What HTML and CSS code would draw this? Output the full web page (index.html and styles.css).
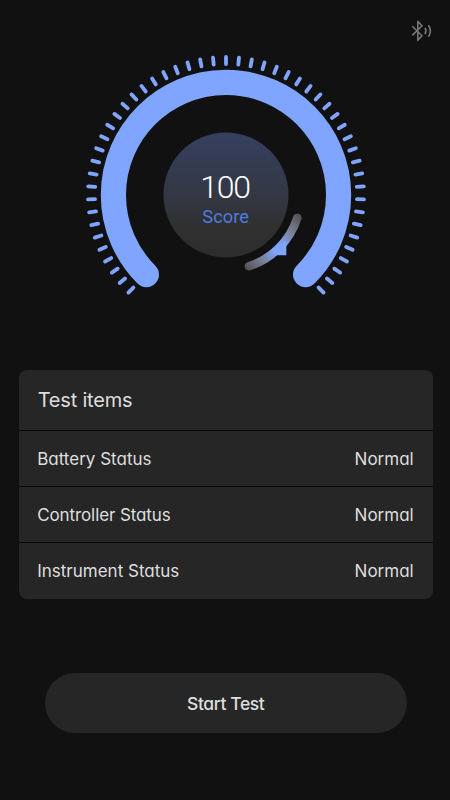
FILE: index.html
```html
<!DOCTYPE html>
<html lang="en">
<head>
<meta charset="utf-8">
<meta name="viewport" content="width=device-width, initial-scale=1">
<title>Vehicle test</title>
<link rel="stylesheet" href="styles.css">
</head>
<body>
<main class="screen">
  <header class="topbar">
    <svg class="bluetooth" viewBox="0 0 22 24" aria-label="Bluetooth">
      <path d="M1.3 7.2 11 16.8 6.8 21.3V2.4L11 6.8 1.3 16.4"/>
      <path d="M14 8.8q1.8 3.2 0 6.4"/>
      <path d="M17.4 6.2q4 5.8 0 11.6"/>
    </svg>
  </header>
  <section class="gauge">
    <svg class="dial" viewBox="-145 -145 290 250">
      <defs>
        <linearGradient id="disc" x1="0" y1="0" x2="0" y2="1">
          <stop offset="0" stop-color="#34405f"/>
          <stop offset=".5" stop-color="#343844"/>
          <stop offset=".75" stop-color="#303031"/>
          <stop offset="1" stop-color="#2d2d2d"/>
        </linearGradient>
        <linearGradient id="pointer" gradientUnits="userSpaceOnUse" x1="73" y1="20" x2="20" y2="73">
          <stop offset="0" stop-color="#545456"/>
          <stop offset=".22" stop-color="#777e91"/>
          <stop offset=".48" stop-color="#80a5ff"/>
          <stop offset=".56" stop-color="#80a5ff"/>
          <stop offset=".78" stop-color="#777e91"/>
          <stop offset="1" stop-color="#545456"/>
        </linearGradient>
      </defs>
      <g id="ticks" class="tick-marks"></g>
      <path class="ring" d="M-79.6 79.6A112.6 112.6 0 1 1 79.6 79.6"/>
      <circle r="62.5" fill="url(#disc)"/>
      <path class="pointer-arc" d="M71.3 22.9A74.9 74.9 0 0 1 22.9 71.3"/>
      <path class="pointer-tip" d="M60.3 46V60.2H51.5L46 56Z"/>
    </svg>
    <div class="score">
      <strong class="score-value">100</strong>
      <span class="score-label">Score</span>
    </div>
  </section>
  <section class="panel">
    <h2 class="panel-title">Test items</h2>
    <div class="row"><span>Battery Status</span><span>Normal</span></div>
    <div class="row"><span class="tight">Controller Status</span><span>Normal</span></div>
    <div class="row"><span>Instrument Status</span><span>Normal</span></div>
  </section>
  <button class="start" type="button">Start Test</button>
</main>
<script src="gauge.js"></script>
</body>
</html>
```
FILE: styles.css
```css
* { box-sizing: border-box; }
body { margin: 0; background: #111; }
.screen {
  width: 450px;
  height: 800px;
  display: flex;
  flex-direction: column;
  background: #111;
  color: #dedede;
  font-family: Inter, "Noto Sans", sans-serif;
  font-feature-settings: "cv11" 1;
}
.topbar {
  height: 49.5px;
  padding: 18.5px 17.5px 0 0;
  display: flex;
  justify-content: flex-end;
}
.bluetooth {
  width: 22px;
  height: 24px;
  fill: none;
  stroke: #777;
  stroke-width: 1.6;
  stroke-linejoin: round;
}
.gauge {
  width: 290px;
  height: 250px;
  margin-left: 80.6px;
  display: grid;
}
.dial, .score { grid-area: 1 / 1; }
.dial { width: 290px; height: 250px; }
.tick-marks { stroke: #80a5ff; stroke-width: 3.8; stroke-linecap: round; }
.ring { fill: none; stroke: #80a5ff; stroke-width: 25.2; stroke-linecap: round; }
.pointer-arc { fill: none; stroke: url(#pointer); stroke-width: 8.5; stroke-linecap: round; }
.pointer-tip { fill: #80a5ff; }
.score {
  padding-top: 119px;
  display: flex;
  flex-direction: column;
  align-items: center;
  font-family: Roboto, sans-serif;
}
.score-value {
  font-size: 32px;
  line-height: 37px;
  font-weight: 300;
  color: #fff;
  letter-spacing: -1.2px;
  padding-right: 1px;
}
.score-label { font-size: 18.3px; line-height: 22px; color: #4e7bdf; }
.panel {
  width: 414px;
  height: 229px;
  margin: 70px 0 0 18.7px;
  border-radius: 8px;
  background: #262626;
}
.panel-title {
  height: 60px;
  margin: 0;
  padding: 0 19px;
  display: flex;
  align-items: center;
  font-size: 20px;
  font-weight: 400;
  letter-spacing: -.2px;
}
.row {
  height: 56.3px;
  padding: 1.5px 19px 0 18.5px;
  border-top: 1.3px solid #090909;
  display: flex;
  align-items: center;
  justify-content: space-between;
  font-size: 17px;
}
.tight { letter-spacing: -.1px; }
.start {
  width: 361.5px;
  height: 60.5px;
  margin: 74.3px 0 0 45px;
  border: 0;
  border-radius: 31px;
  background: #262626;
  color: #dedede;
  font: 500 17.5px Inter, sans-serif;
  font-feature-settings: "cv11" 1;
  letter-spacing: -.4px;
}
```
FILE: gauge.js
```js
const ticks = document.getElementById("ticks");
for (let i = -25; i <= 25; i++) {
  const line = document.createElementNS("http://www.w3.org/2000/svg", "line");
  line.setAttribute("y1", -138);
  line.setAttribute("y2", -131);
  line.setAttribute("transform", `rotate(${i * 5.4})`);
  ticks.appendChild(line);
}
```
